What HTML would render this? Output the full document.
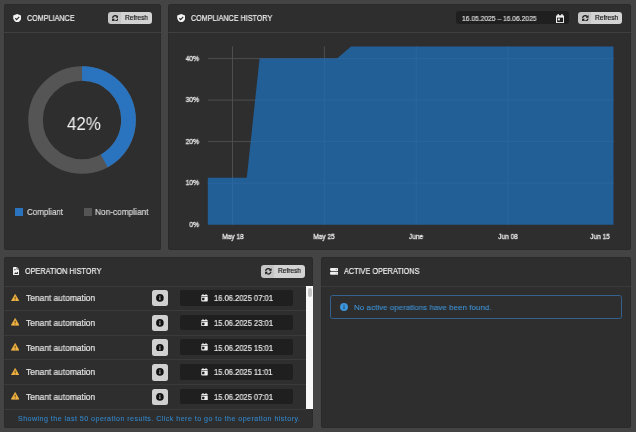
<!DOCTYPE html>
<html><head><meta charset="utf-8">
<style>
*{margin:0;padding:0;box-sizing:border-box}
html,body{width:636px;height:432px;overflow:hidden;background:#444444;font-family:"Liberation Sans",sans-serif;color:#e6e6e6}
.p{position:absolute;background:#2e2e2e;border-radius:2px;border:1px solid #2a2a2a}
.hb{position:absolute;left:-1px;right:-1px;height:1px;background:#3f3f3f}
.t{position:absolute;white-space:nowrap;line-height:1;transform-origin:0 0;will-change:transform;-webkit-text-stroke-width:0.2px}
.btn{position:absolute;background:linear-gradient(to right,#c6c6c6 0,#c6c6c6 12.8px,#d3d3d3 13.2px);border-radius:3px}
.ab{position:absolute}
</style></head><body>

<div class="p" style="left:4.2px;top:3.8px;width:156.7px;height:245.8px"><div class="hb" style="top:27.2px"></div></div>
<svg class="ab" style="left:12.8px;top:13.5px" width="8.4" height="8.6" viewBox="0 0 16 16.4"><path d="M8 0.2 L15.6 2.8 V7.2 C15.6 11.4 12.4 14.6 8 16.4 C3.6 14.6 0.4 11.4 0.4 7.2 V2.8 Z" fill="#f4f4f4"/><path d="M4.4 8.2 L7 10.6 L11.8 5.6" stroke="#2e2e2e" stroke-width="2.3" fill="none"/></svg>
<div class="t" style="left:26.7px;top:14.06px;font-size:8.406px;transform:scaleX(0.8571);color:#f0f0f0;font-weight:normal;">COMPLIANCE</div>
<div class="btn" style="left:107.6px;top:12px;width:44.3px;height:12px"></div>
<svg class="ab" style="left:111.6px;top:14.8px" width="6.6" height="6.6" viewBox="0 0 512 512"><path d="M370.72 133.28C339.458 104.008 298.888 87.962 255.848 88c-77.458.068-144.328 53.178-162.791 126.85-1.344 5.363-6.122 9.15-11.651 9.15H24.103c-7.498 0-13.194-6.807-11.807-14.176C33.933 94.924 134.813 8 256 8c66.448 0 126.791 26.136 171.315 68.685L463.03 40.97C478.149 25.851 504 36.559 504 57.941V192c0 13.255-10.745 24-24 24H345.941c-21.382 0-32.090-25.851-16.971-40.971l41.750-41.749zM32 296h134.059c21.382 0 32.090 25.851 16.971 40.971l-41.750 41.750c31.262 29.273 71.835 45.319 114.876 45.280 77.418-.07 144.315-53.144 162.787-126.849 1.344-5.363 6.122-9.150 11.651-9.150h57.304c7.498 0 13.193 6.807 11.807 14.176C478.067 417.076 377.187 504 256 504c-66.448 0-126.791-26.136-171.315-68.685L48.970 471.030C33.851 486.149 8 475.441 8 454.059V320c0-13.255 10.745-24 24-24z" fill="#1e1e1e" stroke="#1e1e1e" stroke-width="14"/></svg>
<div class="t" style="left:125.0px;top:15.03px;font-size:6.667px;transform:scaleX(0.9826);color:#1a1a1a;font-weight:normal;">Refresh</div>
<svg class="ab" style="left:0;top:0" width="160" height="250">
  <circle cx="82.05" cy="120" r="46.5" stroke="#555555" stroke-width="14.65" fill="none"/>
  <circle cx="82.05" cy="120" r="46.5" stroke="#2a74bf" stroke-width="14.65" fill="none" stroke-dasharray="122.7 400" transform="rotate(-90 82.05 120)"/>
</svg>
<div class="t" style="left:66.7px;top:115.82px;font-size:17.971px;transform:scaleX(0.9389);color:#f0f0f0;font-weight:normal;-webkit-text-stroke-width:0;">42%</div>
<div class="ab" style="left:15.2px;top:208px;width:7.8px;height:7.8px;background:#2a74bf"></div>
<div class="t" style="left:26.5px;top:208.44px;font-size:9.13px;transform:scaleX(0.8756);color:#d8d8d8;font-weight:normal;">Compliant</div>
<div class="ab" style="left:84.3px;top:208px;width:7.7px;height:7.8px;background:#555555"></div>
<div class="t" style="left:95.4px;top:208.44px;font-size:9.13px;transform:scaleX(0.9085);color:#d8d8d8;font-weight:normal;">Non-compliant</div>
<div class="p" style="left:168.2px;top:3.8px;width:462.7px;height:245.8px"><div class="hb" style="top:27.2px"></div></div>
<svg class="ab" style="left:176.6px;top:13.5px" width="8.4" height="8.6" viewBox="0 0 16 16.4"><path d="M8 0.2 L15.6 2.8 V7.2 C15.6 11.4 12.4 14.6 8 16.4 C3.6 14.6 0.4 11.4 0.4 7.2 V2.8 Z" fill="#f4f4f4"/><path d="M4.4 8.2 L7 10.6 L11.8 5.6" stroke="#2e2e2e" stroke-width="2.3" fill="none"/></svg>
<div class="t" style="left:190.6px;top:14.06px;font-size:8.406px;transform:scaleX(0.8568);color:#f0f0f0;font-weight:normal;">COMPLIANCE HISTORY</div>
<div class="ab" style="left:456px;top:11.4px;width:112.5px;height:12.8px;background:#1f1f1f;border-radius:3px"></div>
<div class="t" style="left:461.6px;top:15.89px;font-size:6.957px;transform:scaleX(0.9662);color:#dedede;font-weight:normal;">16.05.2025 – 16.06.2025</div>
<svg class="ab" style="left:555.9px;top:13.7px" width="8.2" height="9.3" viewBox="0 0 16 18"><rect x="0" y="2.5" width="16" height="15.5" rx="2.2" fill="#f0f0f0"/><rect x="3" y="0" width="2.6" height="4" fill="#f0f0f0"/><rect x="10.4" y="0" width="2.6" height="4" fill="#f0f0f0"/><rect x="2.2" y="7" width="11.6" height="8.8" fill="#1f1f1f"/><rect x="3.8" y="8.6" width="3.8" height="3.8" fill="#f0f0f0"/></svg>
<div class="btn" style="left:578px;top:12px;width:44px;height:12.2px"></div>
<svg class="ab" style="left:582px;top:14.8px" width="6.6" height="6.6" viewBox="0 0 512 512"><path d="M370.72 133.28C339.458 104.008 298.888 87.962 255.848 88c-77.458.068-144.328 53.178-162.791 126.85-1.344 5.363-6.122 9.15-11.651 9.15H24.103c-7.498 0-13.194-6.807-11.807-14.176C33.933 94.924 134.813 8 256 8c66.448 0 126.791 26.136 171.315 68.685L463.03 40.97C478.149 25.851 504 36.559 504 57.941V192c0 13.255-10.745 24-24 24H345.941c-21.382 0-32.090-25.851-16.971-40.971l41.750-41.749zM32 296h134.059c21.382 0 32.090 25.851 16.971 40.971l-41.750 41.750c31.262 29.273 71.835 45.319 114.876 45.280 77.418-.07 144.315-53.144 162.787-126.849 1.344-5.363 6.122-9.150 11.651-9.150h57.304c7.498 0 13.193 6.807 11.807 14.176C478.067 417.076 377.187 504 256 504c-66.448 0-126.791-26.136-171.315-68.685L48.970 471.030C33.851 486.149 8 475.441 8 454.059V320c0-13.255 10.745-24 24-24z" fill="#1e1e1e" stroke="#1e1e1e" stroke-width="14"/></svg>
<div class="t" style="left:595.3px;top:15.03px;font-size:6.667px;transform:scaleX(0.9957);color:#1a1a1a;font-weight:normal;">Refresh</div>
<svg class="ab" style="left:0;top:0" width="636" height="260">
<g stroke="#4e4e4e" stroke-width="1">
<line x1="207.8" y1="58.6" x2="613.5" y2="58.6"/>
<line x1="207.8" y1="100.1" x2="613.5" y2="100.1"/>
<line x1="207.8" y1="141.6" x2="613.5" y2="141.6"/>
<line x1="207.8" y1="183.1" x2="613.5" y2="183.1"/>
<line x1="232.5" y1="46.5" x2="232.5" y2="224.6"/>
<line x1="324.4" y1="46.5" x2="324.4" y2="224.6"/>
<line x1="416.2" y1="46.5" x2="416.2" y2="224.6"/>
<line x1="508.0" y1="46.5" x2="508.0" y2="224.6"/>
<line x1="599.9" y1="46.5" x2="599.9" y2="224.6"/>
</g>
<defs><clipPath id="cp"><path d="M207.8 224.7 L207.8 177.8 L246.8 177.8 L259.6 58.4 L337.1 58.4 L351 46.5 L613.5 46.5 L613.5 224.7 Z"/></clipPath></defs>
<path d="M207.8 224.7 L207.8 177.8 L246.8 177.8 L259.6 58.4 L337.1 58.4 L351 46.5 L613.5 46.5 L613.5 224.7 Z" fill="#235f97"/>
<g stroke="#2b669d" stroke-width="1" clip-path="url(#cp)">
<line x1="207.8" y1="58.6" x2="613.5" y2="58.6"/>
<line x1="207.8" y1="100.1" x2="613.5" y2="100.1"/>
<line x1="207.8" y1="141.6" x2="613.5" y2="141.6"/>
<line x1="207.8" y1="183.1" x2="613.5" y2="183.1"/>
<line x1="232.5" y1="46.5" x2="232.5" y2="224.6"/>
<line x1="324.4" y1="46.5" x2="324.4" y2="224.6"/>
<line x1="416.2" y1="46.5" x2="416.2" y2="224.6"/>
<line x1="508.0" y1="46.5" x2="508.0" y2="224.6"/>
</g>
</svg>
<div class="t" style="left:199.4px;top:54.94px;font-size:7.25px;color:#e8e8e8;font-weight:normal;-webkit-text-stroke-width:0.3px;transform:scaleX(0.92) translateX(-100%)">40%</div>
<div class="t" style="left:199.4px;top:96.44px;font-size:7.25px;color:#e8e8e8;font-weight:normal;-webkit-text-stroke-width:0.3px;transform:scaleX(0.92) translateX(-100%)">30%</div>
<div class="t" style="left:199.4px;top:137.94px;font-size:7.25px;color:#e8e8e8;font-weight:normal;-webkit-text-stroke-width:0.3px;transform:scaleX(0.92) translateX(-100%)">20%</div>
<div class="t" style="left:199.4px;top:179.44px;font-size:7.25px;color:#e8e8e8;font-weight:normal;-webkit-text-stroke-width:0.3px;transform:scaleX(0.92) translateX(-100%)">10%</div>
<div class="t" style="left:199.4px;top:220.94px;font-size:7.25px;color:#e8e8e8;font-weight:normal;-webkit-text-stroke-width:0.3px;transform:scaleX(0.92) translateX(-100%)">0%</div>
<div class="t" style="left:232.50px;top:233.34px;font-size:7.25px;color:#e8e8e8;font-weight:normal;-webkit-text-stroke-width:0.3px;transform:scaleX(0.9) translateX(-50%)">May 18</div>
<div class="t" style="left:324.35px;top:233.34px;font-size:7.25px;color:#e8e8e8;font-weight:normal;-webkit-text-stroke-width:0.3px;transform:scaleX(0.9) translateX(-50%)">May 25</div>
<div class="t" style="left:416.20px;top:233.34px;font-size:7.25px;color:#e8e8e8;font-weight:normal;-webkit-text-stroke-width:0.3px;transform:scaleX(0.9) translateX(-50%)">June</div>
<div class="t" style="left:508.05px;top:233.34px;font-size:7.25px;color:#e8e8e8;font-weight:normal;-webkit-text-stroke-width:0.3px;transform:scaleX(0.9) translateX(-50%)">Jun 08</div>
<div class="t" style="left:599.90px;top:233.34px;font-size:7.25px;color:#e8e8e8;font-weight:normal;-webkit-text-stroke-width:0.3px;transform:scaleX(0.9) translateX(-50%)">Jun 15</div>
<div class="p" style="left:4.2px;top:257.2px;width:309.0px;height:170.4px"><div class="hb" style="top:27.7px;background:#3a3a3a"></div></div>
<svg class="ab" style="left:12.8px;top:267.3px" width="6.1" height="8.1" viewBox="0 0 12 16"><path d="M0 1.2 Q0 0 1.2 0 H7.6 L12 4.4 V14.8 Q12 16 10.8 16 H1.2 Q0 16 0 14.8 Z" fill="#f2f2f2"/><path d="M7.6 0.2 V4.4 H11.8" stroke="#3a3a3a" stroke-width="1.2" fill="none"/><circle cx="3.8" cy="5.2" r="1.4" fill="#3a3a3a"/><path d="M2 13.6 L4.8 10.2 L6.6 12 L8.6 9.4 L10 11 V13.6 Z" fill="#3a3a3a"/></svg>
<div class="t" style="left:24.9px;top:266.96px;font-size:8.406px;transform:scaleX(0.8682);color:#f0f0f0;font-weight:normal;">OPERATION HISTORY</div>
<div class="btn" style="left:261px;top:265.1px;width:43.6px;height:12.7px"></div>
<svg class="ab" style="left:265px;top:268.0px" width="6.6" height="6.6" viewBox="0 0 512 512"><path d="M370.72 133.28C339.458 104.008 298.888 87.962 255.848 88c-77.458.068-144.328 53.178-162.791 126.85-1.344 5.363-6.122 9.15-11.651 9.15H24.103c-7.498 0-13.194-6.807-11.807-14.176C33.933 94.924 134.813 8 256 8c66.448 0 126.791 26.136 171.315 68.685L463.03 40.97C478.149 25.851 504 36.559 504 57.941V192c0 13.255-10.745 24-24 24H345.941c-21.382 0-32.090-25.851-16.971-40.971l41.750-41.749zM32 296h134.059c21.382 0 32.090 25.851 16.971 40.971l-41.750 41.750c31.262 29.273 71.835 45.319 114.876 45.280 77.418-.07 144.315-53.144 162.787-126.849 1.344-5.363 6.122-9.150 11.651-9.150h57.304c7.498 0 13.193 6.807 11.807 14.176C478.067 417.076 377.187 504 256 504c-66.448 0-126.791-26.136-171.315-68.685L48.970 471.030C33.851 486.149 8 475.441 8 454.059V320c0-13.255 10.745-24 24-24z" fill="#1e1e1e" stroke="#1e1e1e" stroke-width="14"/></svg>
<div class="t" style="left:278.3px;top:268.13px;font-size:6.667px;transform:scaleX(0.9826);color:#1a1a1a;font-weight:normal;">Refresh</div>
<div class="ab" style="left:4.2px;width:301.8px;top:310.02px;height:1px;background:#3a3a3a"></div>
<svg class="ab" style="left:11px;top:293.60px" width="8.3" height="7.6" viewBox="0 0 18 16.5"><path d="M9 1 L17.2 15.5 H0.8 Z" fill="#f2b443" stroke="#f2b443" stroke-width="1.6" stroke-linejoin="round"/><rect x="8" y="6" width="2" height="4.8" fill="#5a4010"/><rect x="8" y="12" width="2" height="2" fill="#5a4010"/></svg>
<div class="t" style="left:26.4px;top:294.33px;font-size:8.55px;color:#e6e6e6;transform:scaleX(0.983)">Tenant automation</div>
<div class="ab" style="left:152px;top:290.00px;width:16.3px;height:16.4px;background:#d0d0d0;border-radius:2.5px"></div>
<svg class="ab" style="left:156.2px;top:294.20px" width="7.8" height="7.8" viewBox="0 0 16 16"><circle cx="8" cy="8" r="7.8" fill="#111"/><rect x="7" y="6.8" width="2" height="5.5" fill="#d0d0d0"/><rect x="7" y="3.6" width="2" height="2" fill="#d0d0d0"/></svg>
<div class="ab" style="left:179.6px;top:290.00px;width:113.4px;height:15.6px;background:#1f1f1f;border-radius:2px"></div>
<svg class="ab" style="left:201px;top:294.00px" width="7" height="7.6" viewBox="0 0 14 15"><rect x="0.5" y="2" width="13" height="13" rx="1.6" fill="#eee"/><rect x="3" y="0" width="2" height="3.5" fill="#eee"/><rect x="9" y="0" width="2" height="3.5" fill="#eee"/><rect x="0.5" y="4.8" width="13" height="1.1" fill="#1f1f1f"/><rect x="2.2" y="7.6" width="4.6" height="4.6" rx="0.6" fill="#1f1f1f"/></svg>
<div class="t" style="left:214.2px;top:295.28px;font-size:8.26px;color:#e6e6e6;transform:scaleX(0.918)">16.06.2025 07:01</div>
<div class="ab" style="left:4.2px;width:301.8px;top:334.74px;height:1px;background:#3a3a3a"></div>
<svg class="ab" style="left:11px;top:318.32px" width="8.3" height="7.6" viewBox="0 0 18 16.5"><path d="M9 1 L17.2 15.5 H0.8 Z" fill="#f2b443" stroke="#f2b443" stroke-width="1.6" stroke-linejoin="round"/><rect x="8" y="6" width="2" height="4.8" fill="#5a4010"/><rect x="8" y="12" width="2" height="2" fill="#5a4010"/></svg>
<div class="t" style="left:26.4px;top:319.05px;font-size:8.55px;color:#e6e6e6;transform:scaleX(0.983)">Tenant automation</div>
<div class="ab" style="left:152px;top:314.72px;width:16.3px;height:16.4px;background:#d0d0d0;border-radius:2.5px"></div>
<svg class="ab" style="left:156.2px;top:318.92px" width="7.8" height="7.8" viewBox="0 0 16 16"><circle cx="8" cy="8" r="7.8" fill="#111"/><rect x="7" y="6.8" width="2" height="5.5" fill="#d0d0d0"/><rect x="7" y="3.6" width="2" height="2" fill="#d0d0d0"/></svg>
<div class="ab" style="left:179.6px;top:314.72px;width:113.4px;height:15.6px;background:#1f1f1f;border-radius:2px"></div>
<svg class="ab" style="left:201px;top:318.72px" width="7" height="7.6" viewBox="0 0 14 15"><rect x="0.5" y="2" width="13" height="13" rx="1.6" fill="#eee"/><rect x="3" y="0" width="2" height="3.5" fill="#eee"/><rect x="9" y="0" width="2" height="3.5" fill="#eee"/><rect x="0.5" y="4.8" width="13" height="1.1" fill="#1f1f1f"/><rect x="2.2" y="7.6" width="4.6" height="4.6" rx="0.6" fill="#1f1f1f"/></svg>
<div class="t" style="left:214.2px;top:320.00px;font-size:8.26px;color:#e6e6e6;transform:scaleX(0.918)">15.06.2025 23:01</div>
<div class="ab" style="left:4.2px;width:301.8px;top:359.46px;height:1px;background:#3a3a3a"></div>
<svg class="ab" style="left:11px;top:343.04px" width="8.3" height="7.6" viewBox="0 0 18 16.5"><path d="M9 1 L17.2 15.5 H0.8 Z" fill="#f2b443" stroke="#f2b443" stroke-width="1.6" stroke-linejoin="round"/><rect x="8" y="6" width="2" height="4.8" fill="#5a4010"/><rect x="8" y="12" width="2" height="2" fill="#5a4010"/></svg>
<div class="t" style="left:26.4px;top:343.77px;font-size:8.55px;color:#e6e6e6;transform:scaleX(0.983)">Tenant automation</div>
<div class="ab" style="left:152px;top:339.44px;width:16.3px;height:16.4px;background:#d0d0d0;border-radius:2.5px"></div>
<svg class="ab" style="left:156.2px;top:343.64px" width="7.8" height="7.8" viewBox="0 0 16 16"><circle cx="8" cy="8" r="7.8" fill="#111"/><rect x="7" y="6.8" width="2" height="5.5" fill="#d0d0d0"/><rect x="7" y="3.6" width="2" height="2" fill="#d0d0d0"/></svg>
<div class="ab" style="left:179.6px;top:339.44px;width:113.4px;height:15.6px;background:#1f1f1f;border-radius:2px"></div>
<svg class="ab" style="left:201px;top:343.44px" width="7" height="7.6" viewBox="0 0 14 15"><rect x="0.5" y="2" width="13" height="13" rx="1.6" fill="#eee"/><rect x="3" y="0" width="2" height="3.5" fill="#eee"/><rect x="9" y="0" width="2" height="3.5" fill="#eee"/><rect x="0.5" y="4.8" width="13" height="1.1" fill="#1f1f1f"/><rect x="2.2" y="7.6" width="4.6" height="4.6" rx="0.6" fill="#1f1f1f"/></svg>
<div class="t" style="left:214.2px;top:344.72px;font-size:8.26px;color:#e6e6e6;transform:scaleX(0.918)">15.06.2025 15:01</div>
<div class="ab" style="left:4.2px;width:301.8px;top:384.18px;height:1px;background:#3a3a3a"></div>
<svg class="ab" style="left:11px;top:367.76px" width="8.3" height="7.6" viewBox="0 0 18 16.5"><path d="M9 1 L17.2 15.5 H0.8 Z" fill="#f2b443" stroke="#f2b443" stroke-width="1.6" stroke-linejoin="round"/><rect x="8" y="6" width="2" height="4.8" fill="#5a4010"/><rect x="8" y="12" width="2" height="2" fill="#5a4010"/></svg>
<div class="t" style="left:26.4px;top:368.49px;font-size:8.55px;color:#e6e6e6;transform:scaleX(0.983)">Tenant automation</div>
<div class="ab" style="left:152px;top:364.16px;width:16.3px;height:16.4px;background:#d0d0d0;border-radius:2.5px"></div>
<svg class="ab" style="left:156.2px;top:368.36px" width="7.8" height="7.8" viewBox="0 0 16 16"><circle cx="8" cy="8" r="7.8" fill="#111"/><rect x="7" y="6.8" width="2" height="5.5" fill="#d0d0d0"/><rect x="7" y="3.6" width="2" height="2" fill="#d0d0d0"/></svg>
<div class="ab" style="left:179.6px;top:364.16px;width:113.4px;height:15.6px;background:#1f1f1f;border-radius:2px"></div>
<svg class="ab" style="left:201px;top:368.16px" width="7" height="7.6" viewBox="0 0 14 15"><rect x="0.5" y="2" width="13" height="13" rx="1.6" fill="#eee"/><rect x="3" y="0" width="2" height="3.5" fill="#eee"/><rect x="9" y="0" width="2" height="3.5" fill="#eee"/><rect x="0.5" y="4.8" width="13" height="1.1" fill="#1f1f1f"/><rect x="2.2" y="7.6" width="4.6" height="4.6" rx="0.6" fill="#1f1f1f"/></svg>
<div class="t" style="left:214.2px;top:369.44px;font-size:8.26px;color:#e6e6e6;transform:scaleX(0.918)">15.06.2025 11:01</div>
<div class="ab" style="left:4.2px;width:301.8px;top:408.90px;height:1px;background:#3a3a3a"></div>
<svg class="ab" style="left:11px;top:392.48px" width="8.3" height="7.6" viewBox="0 0 18 16.5"><path d="M9 1 L17.2 15.5 H0.8 Z" fill="#f2b443" stroke="#f2b443" stroke-width="1.6" stroke-linejoin="round"/><rect x="8" y="6" width="2" height="4.8" fill="#5a4010"/><rect x="8" y="12" width="2" height="2" fill="#5a4010"/></svg>
<div class="t" style="left:26.4px;top:393.21px;font-size:8.55px;color:#e6e6e6;transform:scaleX(0.983)">Tenant automation</div>
<div class="ab" style="left:152px;top:388.88px;width:16.3px;height:16.4px;background:#d0d0d0;border-radius:2.5px"></div>
<svg class="ab" style="left:156.2px;top:393.08px" width="7.8" height="7.8" viewBox="0 0 16 16"><circle cx="8" cy="8" r="7.8" fill="#111"/><rect x="7" y="6.8" width="2" height="5.5" fill="#d0d0d0"/><rect x="7" y="3.6" width="2" height="2" fill="#d0d0d0"/></svg>
<div class="ab" style="left:179.6px;top:388.88px;width:113.4px;height:15.6px;background:#1f1f1f;border-radius:2px"></div>
<svg class="ab" style="left:201px;top:392.88px" width="7" height="7.6" viewBox="0 0 14 15"><rect x="0.5" y="2" width="13" height="13" rx="1.6" fill="#eee"/><rect x="3" y="0" width="2" height="3.5" fill="#eee"/><rect x="9" y="0" width="2" height="3.5" fill="#eee"/><rect x="0.5" y="4.8" width="13" height="1.1" fill="#1f1f1f"/><rect x="2.2" y="7.6" width="4.6" height="4.6" rx="0.6" fill="#1f1f1f"/></svg>
<div class="t" style="left:214.2px;top:394.16px;font-size:8.26px;color:#e6e6e6;transform:scaleX(0.918)">15.06.2025 07:01</div>
<div class="ab" style="left:305.6px;top:286px;width:7.6px;height:122.5px;background:#f8f8f8"></div>
<div class="ab" style="left:307.5px;top:287.5px;width:4.3px;height:9.3px;background:#c4c4c4;border-radius:2px"></div>
<div class="t" style="left:17.8px;top:416.06px;font-size:7.1px;letter-spacing:0.46px;color:#3384c6;-webkit-text-stroke-width:0.1px">Showing the last 50 operation results. Click here to go to the operation history.</div>
<div class="p" style="left:321.2px;top:257.2px;width:309.7px;height:170.4px"><div class="hb" style="top:27.7px;background:#3a3a3a"></div></div>
<svg class="ab" style="left:329.8px;top:267.9px" width="8.4" height="6.8" viewBox="0 0 16 13"><rect x="0" y="0" width="16" height="5.6" rx="2.2" fill="#f0f0f0"/><rect x="0" y="7.4" width="16" height="5.6" rx="2.2" fill="#f0f0f0"/><circle cx="12" cy="2.8" r="1.2" fill="#999"/><circle cx="12" cy="10.2" r="1.2" fill="#bbb"/></svg>
<div class="t" style="left:343.9px;top:267.06px;font-size:8.406px;transform:scaleX(0.8667);color:#f0f0f0;font-weight:normal;">ACTIVE OPERATIONS</div>
<div class="ab" style="left:330.1px;top:294.7px;width:291.9px;height:24.6px;border:1.25px solid #34618e;border-radius:2.5px"></div>
<svg class="ab" style="left:339.8px;top:303.3px" width="8" height="8" viewBox="0 0 16 16"><circle cx="8" cy="8" r="7.9" fill="#3d95dc"/><rect x="7" y="6.8" width="2" height="5.5" fill="#1f4466"/><rect x="7" y="3.6" width="2" height="2" fill="#1f4466"/></svg>
<div class="t" style="left:353.9px;top:303.60px;font-size:8.116px;transform:scaleX(0.9906);color:#3d92d6;font-weight:normal;-webkit-text-stroke-width:0.1px;">No active operations have been found.</div>
</body></html>
